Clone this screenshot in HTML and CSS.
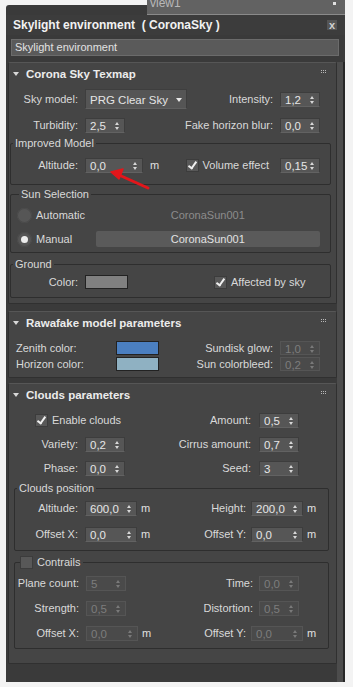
FILE: index.html
```html
<!DOCTYPE html>
<html lang="en">
<head>
    <meta charset="UTF-8">
    <meta name="viewport" content="width=device-width, initial-scale=1.0">
    <title>Skylight environment</title>
    <link rel="stylesheet" href="styles.css">
</head>
<body>

<div class="window">
    <div class="tabs">
        <div class="tab"><span>view1</span><i class="pin"></i></div>
    </div>
    <div class="titlebar">
        <span class="title">Skylight environment &nbsp;( CoronaSky )</span>
        <span class="close">x</span>
    </div>
    <div class="namefield">Skylight environment</div>

    <div class="main">
        <div class="panels">

            <!-- Corona Sky Texmap -->
            <section class="rollout sky">
                <div class="rhead">
                    <span class="tri"></span><span class="rtitle">Corona Sky Texmap</span>
                    <svg class="grip" width="6" height="4" viewBox="0 0 6 4"><path d="M0 0h1v1H0zM2 0h1v1H2zM4 0h1v1H4zM0 2h1v1H0zM2 2h1v1H2zM4 2h1v1H4z" fill="#b8b8b8"/></svg>
                </div>
                <div class="row first">
                    <span class="lbl">Sky model:</span>
                    <span class="dropdown">PRG Clear Sky</span>
                    <span class="right"><span class="rlbl">Intensity:</span><span class="spin">1,2</span></span>
                </div>
                <div class="row">
                    <span class="lbl">Turbidity:</span>
                    <span class="spin">2,5</span>
                    <span class="right"><span class="rlbl">Fake horizon blur:</span><span class="spin">0,0</span></span>
                </div>

                <fieldset class="group improved">
                    <legend>Improved Model</legend>
                    <div class="row">
                        <span class="lbl">Altitude:</span>
                        <span class="spin wider">0,0</span>
                        <span class="unit">m</span>
                        <span class="right">
                            <span class="check on"></span><span class="clbl">Volume effect</span>
                            <span class="spin">0,15</span>
                        </span>
                    </div>
                </fieldset>

                <fieldset class="group sun">
                    <legend>Sun Selection</legend>
                    <div class="row">
                        <span class="radio"></span><span class="rad-lbl">Automatic</span>
                        <span class="sunname">CoronaSun001</span>
                    </div>
                    <div class="row">
                        <span class="radio on"></span><span class="rad-lbl">Manual</span>
                        <span class="button">CoronaSun001</span>
                    </div>
                </fieldset>

                <fieldset class="group ground">
                    <legend>Ground</legend>
                    <div class="row">
                        <span class="lbl">Color:</span>
                        <span class="swatch gray"></span>
                        <span class="check on affected"></span><span class="clbl">Affected by sky</span>
                    </div>
                </fieldset>
            </section>

            <!-- Rawafake -->
            <section class="rollout rawa">
                <div class="rhead">
                    <span class="tri"></span><span class="rtitle">Rawafake model parameters</span>
                    <svg class="grip" width="6" height="4" viewBox="0 0 6 4"><path d="M0 0h1v1H0zM2 0h1v1H2zM4 0h1v1H4zM0 2h1v1H0zM2 2h1v1H2zM4 2h1v1H4z" fill="#b8b8b8"/></svg>
                </div>
                <div class="row first">
                    <span class="lbl">Zenith color:</span>
                    <span class="swatch zenith"></span>
                    <span class="right"><span class="rlbl">Sundisk glow:</span><span class="spin off">1,0</span></span>
                </div>
                <div class="row">
                    <span class="lbl">Horizon color:</span>
                    <span class="swatch horizon"></span>
                    <span class="right"><span class="rlbl">Sun colorbleed:</span><span class="spin off">0,2</span></span>
                </div>
            </section>

            <!-- Clouds -->
            <section class="rollout clouds">
                <div class="rhead">
                    <span class="tri"></span><span class="rtitle">Clouds parameters</span>
                    <svg class="grip" width="6" height="4" viewBox="0 0 6 4"><path d="M0 0h1v1H0zM2 0h1v1H2zM4 0h1v1H4zM0 2h1v1H0zM2 2h1v1H2zM4 2h1v1H4z" fill="#b8b8b8"/></svg>
                </div>
                <div class="row first">
                    <span class="check on enable"></span><span class="clbl">Enable clouds</span>
                    <span class="right"><span class="rlbl">Amount:</span><span class="spin">0,5</span></span>
                </div>
                <div class="row">
                    <span class="lbl">Variety:</span>
                    <span class="spin">0,2</span>
                    <span class="right"><span class="rlbl">Cirrus amount:</span><span class="spin">0,7</span></span>
                </div>
                <div class="row">
                    <span class="lbl">Phase:</span>
                    <span class="spin">0,0</span>
                    <span class="right"><span class="rlbl">Seed:</span><span class="spin">3</span></span>
                </div>

                <fieldset class="group position">
                    <legend>Clouds position</legend>
                    <div class="row">
                        <span class="lbl">Altitude:</span>
                        <span class="spin wide">600,0</span>
                        <span class="unit">m</span>
                        <span class="right"><span class="rlbl">Height:</span><span class="spin wide">200,0</span><span class="unit">m</span></span>
                    </div>
                    <div class="row">
                        <span class="lbl">Offset X:</span>
                        <span class="spin wide">0,0</span>
                        <span class="unit">m</span>
                        <span class="right"><span class="rlbl">Offset Y:</span><span class="spin wide">0,0</span><span class="unit">m</span></span>
                    </div>
                </fieldset>

                <fieldset class="group contrails">
                    <legend><span class="check"></span><span class="clbl">Contrails</span></legend>
                    <div class="row">
                        <span class="lbl">Plane count:</span>
                        <span class="spin off">5</span>
                        <span class="right"><span class="rlbl">Time:</span><span class="spin off">0,0</span><span class="nounit"></span></span>
                    </div>
                    <div class="row">
                        <span class="lbl">Strength:</span>
                        <span class="spin off">0,5</span>
                        <span class="right"><span class="rlbl">Distortion:</span><span class="spin off">0,5</span><span class="nounit"></span></span>
                    </div>
                    <div class="row">
                        <span class="lbl">Offset X:</span>
                        <span class="spin wide off">0,0</span>
                        <span class="unit">m</span>
                        <span class="right"><span class="rlbl">Offset Y:</span><span class="spin wide off">0,0</span><span class="unit">m</span></span>
                    </div>
                </fieldset>
            </section>

        </div>
        <div class="track"></div>
    </div>
</div>

<!-- red pointer drawn over the screenshot -->
<svg class="pointer" width="353" height="687" viewBox="0 0 353 687">
    <path d="M148 188 L119 175" stroke="#e3161b" stroke-width="3" stroke-linecap="round" fill="none"/>
    <path d="M111 172 L123 169 L119 179 Z" fill="#e3161b" stroke="#e3161b" stroke-width="1.5" stroke-linejoin="round"/>
</svg>

</body>
</html>
```

FILE: styles.css
```css
body {
    margin: 0;
    background: #f3f3f3;
    font-family: "Liberation Sans", Arial, sans-serif;
    font-size: 11px;
    color: #d9d9d9;
    position: relative;
}

.window {
    margin: 5px 0 0 6px;
    width: 339px;
    height: 677px;
    background: #3a3a3a;
    border-radius: 3px 3px 0 0;
    display: flex;
    flex-direction: column;
}

/* top tab strip */
.tabs {
    height: 10px;
    display: flex;
    justify-content: flex-end;
}
.tab {
    margin-top: -5px;
    width: 198px;
    height: 14px;
    background: #626262;
    border-bottom: 1px solid #8a8a8a;
    overflow: hidden;
    position: relative;
}
.tab span {
    display: block;
    margin: -4px 0 0 3px;
    color: #b8b8b8;
    font-size: 12px;
    line-height: 14px;
}
.tab .pin {
    position: absolute;
    right: 9px;
    top: 2px;
    width: 3px;
    height: 3px;
    background: #e0e0e0;
}

.titlebar {
    height: 20px;
    display: flex;
    align-items: center;
    padding: 0 8px 0 7px;
    background: #3c3c3c;
}
.title {
    font-size: 12px;
    font-weight: bold;
    color: #f2f2f2;
    white-space: pre;
}
.close {
    margin-left: auto;
    font-weight: bold;
    font-size: 11px;
    color: #d0d0d0;
    background: #555;
    padding: 0 2px;
    line-height: 10px;
}

.namefield {
    margin: 4px 6px 0 5px;
    height: 15px;
    line-height: 15px;
    padding-left: 3px;
    background: #5a5a5a;
    border: 1px solid #6b6b6b;
    color: #e2e2e2;
}

.main {
    flex: 1;
    display: flex;
    padding: 6px 0 0 2px;
}
.panels {
    width: 329px;
    display: flex;
    flex-direction: column;
}
.track {
    width: 6px;
    background: #4c4c4c;
    border-right: 2px solid #272727;
}

/* rollouts */
.rollout {
    background: #454545;
    border: 1px solid #303030;
    border-top-color: #565656;
    border-radius: 2px;
}
.sky { padding-bottom: 5px; }
.rawa { margin-top: 7px; padding-bottom: 6px; }
.clouds { margin-top: 5px; padding-bottom: 14px; }

.rhead {
    height: 22px;
    display: flex;
    align-items: center;
    padding-left: 4px;
}
.tri {
    width: 0;
    height: 0;
    border-left: 3px solid transparent;
    border-right: 3px solid transparent;
    border-top: 4px solid #d8d8d8;
    margin-right: 7px;
}
.rtitle {
    font-weight: bold;
    font-size: 11.5px;
    color: #ececec;
}
.grip {
    margin: -4px 9px 0 auto;
}

.row {
    display: flex;
    align-items: center;
    height: 24px;
    padding-right: 16px;
}
.right {
    margin-left: auto;
    display: flex;
    align-items: center;
}
.lbl {
    width: 69px;
    text-align: right;
    margin-right: 7px;
    white-space: nowrap;
}
.rlbl {
    margin-right: 7px;
    white-space: nowrap;
}
.unit {
    margin-left: 7px;
    color: #e0e0e0;
}

/* fields */
.spin {
    width: 40px;
    height: 15px;
    line-height: 15px;
    box-sizing: border-box;
    padding-left: 4px;
    background: #565656;
    border: 1px solid #3d3d3d;
    border-bottom-color: #626262;
    color: #e6e6e6;
    font-size: 11.5px;
    position: relative;
}
.spin::before,
.spin::after {
    content: "";
    position: absolute;
    right: 5px;
    border-left: 2.5px solid transparent;
    border-right: 2.5px solid transparent;
}
.spin::before {
    top: 3px;
    border-bottom: 3px solid #d8d8d8;
}
.spin::after {
    top: 8px;
    border-top: 3px solid #d8d8d8;
}
.spin.wider { width: 58px; }
.spin.wide { width: 52px; }
.spin.off {
    background: #4a4a4a;
    border-color: #555;
    color: #7d7d7d;
}
.spin.off::before { border-bottom-color: #7a7a7a; }
.spin.off::after { border-top-color: #7a7a7a; }

.dropdown {
    width: 102px;
    height: 20px;
    line-height: 20px;
    box-sizing: border-box;
    padding-left: 4px;
    background: #555;
    border: 1px solid #3e3e3e;
    border-bottom-color: #606060;
    color: #e4e4e4;
    font-size: 11.5px;
    position: relative;
}
.dropdown::after {
    content: "";
    position: absolute;
    right: 4px;
    top: 8px;
    border-left: 3px solid transparent;
    border-right: 3px solid transparent;
    border-top: 4px solid #e8e8e8;
}

.check {
    width: 13px;
    height: 13px;
    box-sizing: border-box;
    background: #585858;
    border: 1px solid #3c3c3c;
    position: relative;
    flex: none;
}
.check.on::after {
    content: "";
    position: absolute;
    left: 3px;
    top: 0;
    width: 3px;
    height: 7px;
    border: solid #f0f0f0;
    border-width: 0 2px 2px 0;
    transform: rotate(35deg);
}
.clbl {
    margin-left: 4px;
    white-space: nowrap;
}

.radio {
    width: 15px;
    height: 15px;
    border-radius: 50%;
    background: #565656;
    box-shadow: inset 0 0 0 1px #4a4a4a;
    position: relative;
    flex: none;
}
.radio.on::after {
    content: "";
    position: absolute;
    left: 4px;
    top: 4px;
    width: 7px;
    height: 7px;
    border-radius: 50%;
    background: #ededed;
}
.rad-lbl {
    width: 60px;
    margin-left: 4px;
}
.sunname,
.button {
    width: 226px;
    text-align: center;
}
.sunname { color: #8c8c8c; }
.button {
    height: 16px;
    line-height: 16px;
    background: #5a5a5a;
    border-radius: 2px;
    color: #e2e2e2;
}

.swatch {
    height: 12px;
    width: 41px;
    border: 1px solid #222;
}
.swatch.gray { background: #808080; }
.swatch.zenith { background: #4b7fc0; }
.swatch.horizon { background: #8fb1c2; }

/* groups */
.group {
    margin: 0;
    padding: 0;
    border: 1px solid #2e2e2e;
    border-radius: 2px;
    min-width: 0;
}
.group legend {
    margin-left: 2px;
    padding: 0 2px;
    line-height: 13px;
    font-size: 11px;
}

/* Corona Sky Texmap */
.sky .first { margin-top: 2px; }
.sky > .row + .row { margin-top: 2px; }
.sky .group { margin: 0 5px 0 1px; }
.sky .group .row { padding-right: 10px; }
.sky .group .lbl { width: 67px; }
.improved .row { margin-top: 3px; }
.improved { padding-bottom: 7px !important; }
.improved .right .clbl { margin-right: 11px; }
.sun { margin-top: 3px !important; padding: 0 0 1px 6px !important; }
.sun .row:first-of-type { margin-top: 2px; }
.ground { margin-top: 5px !important; padding-bottom: 5px !important; }
.ground .row { height: 20px; margin-top: 1px; }
.ground .swatch { margin-right: 86px; }

/* Rawafake */
.rawa .row { height: 15px; }
.rawa .first { margin-top: 6px; }
.rawa .row + .row { margin-top: 1px; }
.rawa .lbl {
    width: 107px;
    margin-right: 0;
    padding-left: 7px;
    box-sizing: border-box;
    text-align: left;
}
.rawa .spin { height: 14px; line-height: 14px; }

/* Clouds */
.clouds > .row { padding-right: 37px; }
.clouds .first { margin-top: 2px; }
.clouds .enable { margin-left: 26px; }
.clouds .rlbl { margin-right: 8px; }
.clouds .group { margin: 0 7px 0 5px; }
.clouds .group .row { padding-right: 13px; }
.position { margin-top: 2px !important; padding-bottom: 4px !important; }
.position .lbl { width: 63px; }
.position .row:first-of-type { margin-top: 1px; }
.position .row + .row { margin-top: 2px; }
.clouds .group .rlbl { margin-right: 5px; }
.clouds .group .unit { margin-left: 4px; width: 8px; }
.clouds .nounit { width: 16px; }
.contrails { margin-top: 5px !important; padding-bottom: 3px !important; }
.contrails legend {
    display: flex;
    align-items: center;
    margin-left: 5px;
    padding: 0 3px 0 0;
}
.contrails .lbl { width: 64px; }
.contrails .row:first-of-type { margin-top: 2px; }
.contrails .row + .row { margin-top: 1px; }
.contrails .row:first-of-type .rlbl,
.contrails .row:nth-of-type(2) .rlbl { margin-right: 6px; }

.pointer {
    position: absolute;
    left: 0;
    top: 0;
    pointer-events: none;
}
```
